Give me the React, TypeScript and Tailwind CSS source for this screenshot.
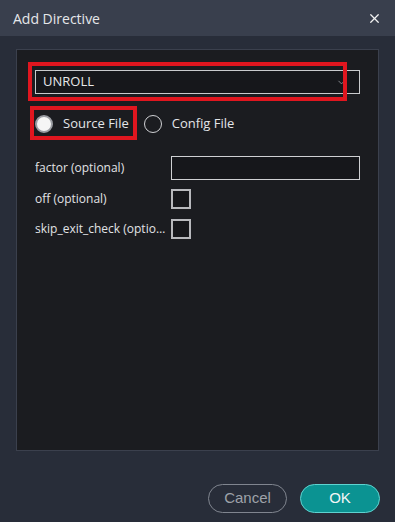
import { X, ChevronDown } from 'lucide-react'

const font = { fontFamily: '"Open Sans", "Noto Sans", sans-serif' }

function Row({ label, children }: { label: string; children: React.ReactNode }) {
  return (
    <div className="flex items-center">
      <span className="w-[136px] truncate pr-1 text-[12px] text-[#e2e3e6]">{label}</span>
      {children}
    </div>
  )
}

export default function App() {
  return (
    <div className="relative flex h-[522px] w-[395px] flex-col bg-[#282d39]" style={font}>
      <header className="flex h-9 shrink-0 items-center justify-between bg-[#393f4d] px-[13px]">
        <span className="text-[14px] text-[#e6e7ea]">Add Directive</span>
        <X size={15} strokeWidth={2} className="text-[#f2f2f2]" />
      </header>

      <div className="px-4 pt-[13px]">
        <div className="h-[402px] border border-[#3b404d] bg-[#1b1c20] px-[18px] pt-5">
          <div className="flex h-6 items-center justify-between border border-[#c9cacd] bg-[#16171b] pl-[7px] pr-[12px]">
            <span className="text-[13px] text-[#e8e8ea]">UNROLL</span>
            <ChevronDown size={11} strokeWidth={2} className="text-[#8d9096]" />
          </div>

          <div className="mt-[21px] flex h-[18px] items-center gap-[15px] text-[13px] text-[#e4e5e8]">
            <div className="flex items-center gap-[10px]">
              <span className="h-[18px] w-[18px] rounded-full border-2 border-[#9a9ca2] bg-[#f5f5f5]" />
              <span>Source File</span>
            </div>
            <div className="flex items-center gap-[10px]">
              <span className="h-[18px] w-[18px] rounded-full border border-[#d0d1d4] bg-[#1b1c20]" />
              <span>Config File</span>
            </div>
          </div>

          <div className="mt-[23px] flex flex-col gap-[9px]">
            <Row label="factor (optional)">
              <div className="h-6 w-[190px] border border-[#cfd0d3] bg-[#16171b]" />
            </Row>
            <Row label="off (optional)">
              <div className="h-5 w-5 border-2 border-[#b8b9bd] bg-[#16171b]" />
            </Row>
            <div className="mt-[1px]">
              <Row label="skip_exit_check (optional)">
                <div className="h-5 w-5 border-2 border-[#b8b9bd] bg-[#16171b]" />
              </Row>
            </div>
          </div>
        </div>
      </div>

      <div className="mt-[33px] flex justify-end gap-[13px] pr-[15px]" style={{ fontFamily: '"Liberation Sans", Arial, sans-serif' }}>
        <button className="h-[29px] w-[79px] rounded-full border border-[#80858f] text-[15px] text-[#9ea2a9]">
          Cancel
        </button>
        <button className="h-[29px] w-[80px] rounded-full border border-[#5fd3d0] bg-[#0b9392] text-[15px] text-[#f4f6f6]">
          OK
        </button>
      </div>

      <div className="pointer-events-none absolute left-[28px] top-[62px] h-[39px] w-[319px] border-4 border-[#e0161f]" />
      <div className="pointer-events-none absolute left-[30px] top-[106px] h-[34px] w-[107px] border-4 border-[#e0161f]" />
    </div>
  )
}
